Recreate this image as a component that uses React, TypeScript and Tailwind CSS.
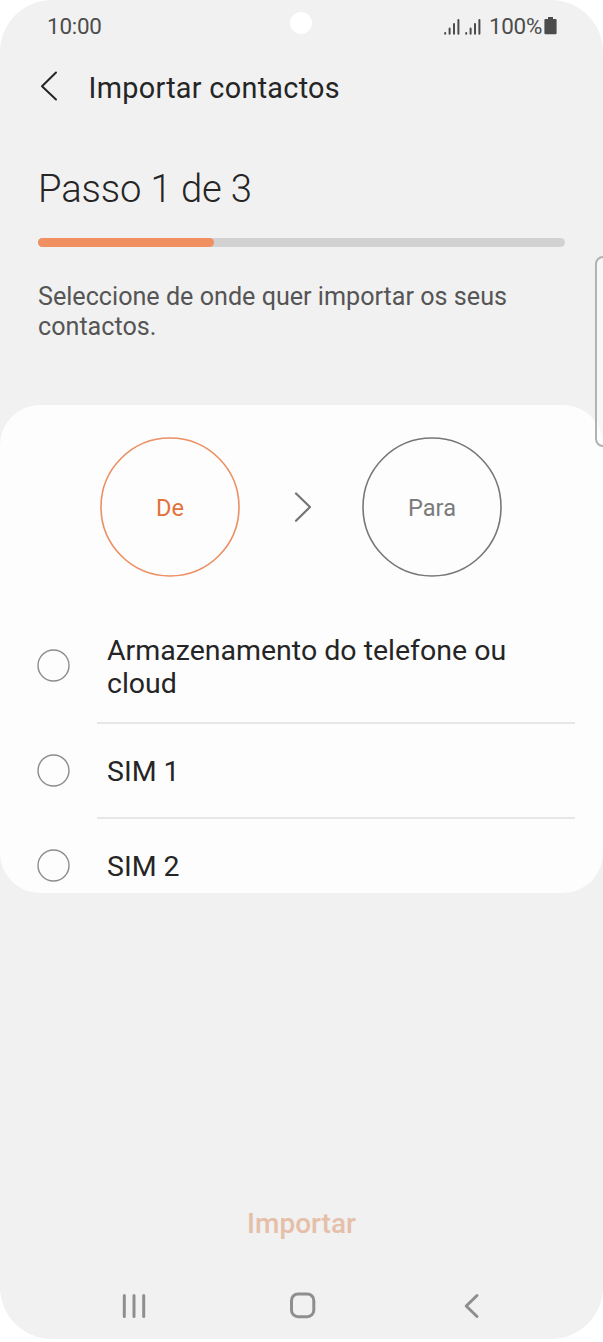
import { useState } from "react";

const sources = ["Armazenamento do telefone ou cloud", "SIM 1", "SIM 2"];

function SignalIcon() {
  return (
    <svg width="16" height="18" viewBox="0 0 16 18" fill="none" stroke="#4c4c4c" strokeWidth="2" strokeLinecap="round">
      <path d="M1.2 15v.8M5.6 10.5V15.8M10 6v9.8M14.4 2v13.8" />
    </svg>
  );
}

function BatteryIcon() {
  return (
    <svg width="13" height="18" viewBox="0 0 13 18" fill="#4c4c4c">
      <path d="M4 0h5v2h2.6q1 0 1 1v13.2q0 1-1 1H1.4q-1 0-1-1V3q0-1 1-1H4z" />
    </svg>
  );
}

function StepCircle({ label, className }: { label: string; className: string }) {
  return (
    <div className={`grid place-items-center ${className}`}>
      <svg className="col-start-1 row-start-1" width="140" height="140" viewBox="0 0 140 140" fill="none" strokeWidth="1.6">
        <circle cx="70" cy="70" r="69" />
      </svg>
      <span className="col-start-1 row-start-1 pt-[4px]">{label}</span>
    </div>
  );
}

export default function App() {
  const [selected, setSelected] = useState<string | null>(null);

  return (
    <div className="h-[1342px] w-[603px] bg-white font-['Roboto',sans-serif]">
      <div className="relative flex h-[1339px] flex-col overflow-hidden rounded-[52px] bg-[#f1f1f1] text-[#252525]">
        <div className="flex h-[53px] items-center pl-[47px] pr-[46px] text-[22.4px] leading-none text-[#4c4c4c]">
          <span className="w-[243px] tracking-[-0.2px]">10:00</span>
          <span className="mb-[7px] size-[22px] rounded-full bg-white" />
          <div className="ml-auto flex items-center">
            <SignalIcon />
            <span className="w-[5px]" />
            <SignalIcon />
            <span className="ml-[8px] tracking-[-0.3px]">100%</span>
            <span className="ml-[2px] mb-px">
              <BatteryIcon />
            </span>
          </div>
        </div>

        <header className="flex h-[69px] items-center pl-[40px]">
          <button type="button" className="mb-[3px]">
            <svg width="18" height="30" viewBox="0 0 18 30" fill="none" stroke="#252525" strokeWidth="2" strokeLinecap="round" strokeLinejoin="round">
              <path d="M16 1.5 2 15.3l14 13.2" />
            </svg>
          </button>
          <h1 className="ml-[30.5px] text-[28.8px] leading-[34px] tracking-[0.3px]">Importar contactos</h1>
        </header>

        <section className="h-[283px] pl-[38px] pr-[38px] pt-[45px]">
          <h2 className="text-[38.2px] leading-[44px] font-light tracking-[-0.1px]">Passo 1 de 3</h2>
          <div className="mt-[26.5px] h-[9.5px] w-[527px] rounded-full bg-[#d2d2d2]">
            <div className="h-full w-1/3 rounded-full bg-[#f08f60]" />
          </div>
          <p className="mt-[35px] text-[25.15px] leading-[30px] text-[#555555]">
            Seleccione de onde quer importar os seus contactos.
          </p>
        </section>

        <main className="h-[488px] overflow-hidden rounded-[40px] bg-[#fdfdfd]">
          <div className="flex items-center pl-[100px] pt-[32px] text-[23.6px]">
            <StepCircle label="De" className="stroke-[#ec8f62] text-[#e2713c]" />
            <svg className="ml-[54px]" width="18" height="32" viewBox="0 0 18 32" fill="none" stroke="#757575" strokeWidth="2.2" strokeLinecap="round" strokeLinejoin="round">
              <path d="M2 2.5 16 16 2 29.8" />
            </svg>
            <StepCircle label="Para" className="ml-[50px] stroke-[#777777] text-[#7b7b7b]" />
          </div>

          <ul className="pt-[37px]">
            {sources.map((source, i) => (
              <li
                key={source}
                onClick={() => setSelected(source)}
                className={`flex items-center pl-[37px] ${i === 0 ? "h-[110px]" : "h-[95px]"}`}
              >
                <svg
                  className={`mr-[27px] shrink-0 ${i === 0 ? "mb-[7px]" : "mb-[2px]"} ${selected === source ? "stroke-[#e2713c]" : "stroke-[#8c8c8c]"}`}
                  width="33"
                  height="33"
                  viewBox="0 0 33 33"
                  fill="none"
                  strokeWidth="1.4"
                >
                  <circle cx="16.5" cy="16.5" r="15.5" />
                </svg>
                <span className={`flex h-full w-[478px] items-center pl-[10px] pr-[40px] text-[28.5px] leading-[33px] ${i === 0 ? "pb-[2px]" : i === 1 ? "pt-[2px]" : ""} ${i < sources.length - 1 ? "border-b-2 border-[#e7e7e7]" : ""}`}>
                  {source}
                </span>
              </li>
            ))}
          </ul>
        </main>

        <div className="mt-auto flex justify-center pb-[28px]">
          <button type="button" className="text-[28px] leading-[40px] font-medium text-[#e6bfa9]">
            Importar
          </button>
        </div>

        <nav className="flex h-[67px] items-center pl-[122px]">
          <svg width="24" height="26" viewBox="0 0 24 26" fill="none" stroke="#8e8e8e" strokeWidth="3" strokeLinecap="round">
            <path d="M2.3 2.5v21M12 2.5v21M21.7 2.5v21" />
          </svg>
          <svg className="ml-[143px]" width="27" height="27" viewBox="0 0 27 27" fill="none" stroke="#8e8e8e" strokeWidth="3">
            <rect x="2.5" y="2" width="22.3" height="22.7" rx="6.5" />
          </svg>
          <svg className="ml-[147px]" width="17" height="26" viewBox="0 0 17 26" fill="none" stroke="#8e8e8e" strokeWidth="3" strokeLinecap="round" strokeLinejoin="round">
            <path d="M14 2.5 3.2 13 14 23.5" />
          </svg>
        </nav>

        {/* edge panel handle */}
        <div className="absolute top-[256px] right-[-4px] h-[191px] w-[12px] rounded-l-[8px] border-2 border-[#b2b2b2] bg-white/50" />
      </div>
    </div>
  );
}
